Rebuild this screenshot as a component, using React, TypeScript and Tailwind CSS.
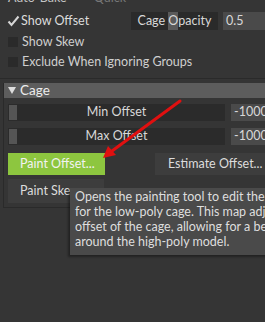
import React from "react";

const font = { fontFamily: 'Lato, "Open Sans", sans-serif' };

function Check({ checked }: { checked?: boolean }) {
  return checked ? (
    <svg width="13" height="12" viewBox="0 0 13 12" className="shrink-0">
      <path d="M1.5 6.5 L4.5 10 L11.5 1.5" stroke="#d6d6d6" strokeWidth="2" fill="none" />
    </svg>
  ) : (
    <div className="w-[10px] h-[10px] bg-[#2a2a2a] mr-[3px] shrink-0" />
  );
}

function SliderRow({ label }: { label: string }) {
  return (
    <div className="flex items-center h-[17px]">
      <div className="relative w-[217px] h-[17px] bg-[#2b2b2b] flex items-center justify-center">
        <div className="absolute left-[1px] top-[1px] w-[8px] h-[15px] bg-[#555555]" />
        <span className="text-[12.5px] text-[#d8d8d8] leading-none">{label}</span>
      </div>
      <div className="ml-[6px] flex-1 h-[17px] bg-[#4a4a4a] flex items-center pl-[3px] text-[12.5px] text-[#d8d8d8] leading-none whitespace-nowrap overflow-hidden">
        -10000
      </div>
    </div>
  );
}

export default function App() {
  return (
    <div className="relative w-[265px] h-[322px] bg-[#353535] overflow-hidden select-none" style={font}>
      <div className="h-[6px] flex items-end pl-[8px] text-[12.5px] leading-none">
        <div className="flex translate-y-[-2px] whitespace-nowrap">
          <span className="text-[#c4c4c4]">Auto</span>
          <span className="text-[#c4c4c4] ml-[5px]">Bake</span>
          <span className="text-[#777] ml-[15px]">•</span>
          <span className="text-[#777] ml-[5px]">Quick</span>
        </div>
      </div>
      <div className="flex items-center mt-[6px] h-[18px]">
        <div className="flex items-center pl-[7px] w-[131px] gap-[1px]">
          <Check checked />
          <span className="text-[12.5px] text-[#dcdcdc] leading-none whitespace-nowrap">Show Offset</span>
        </div>
        <div className="w-[87px] h-[18px] bg-[#2a2a2a] flex items-stretch justify-center text-[12.5px] text-[#d8d8d8] leading-none whitespace-nowrap">
          <span className="flex items-center">Cage&nbsp;</span>
          <span className="flex items-center bg-[#5a5a5a]">O</span>
          <span className="flex items-center">pacity</span>
        </div>
        <div className="ml-[5px] flex-1 h-[18px] bg-[#4a4a4a] flex items-center pl-[3px] text-[12.5px] text-[#d8d8d8] leading-none">
          0.5
        </div>
      </div>
      <div className="flex items-center pl-[8px] h-[20px] mt-[2px] gap-[1px]">
        <Check />
        <span className="text-[12.5px] text-[#cfcfcf] leading-none whitespace-nowrap">Show Skew</span>
      </div>
      <div className="flex items-center pl-[8px] h-[20px] gap-[1px]">
        <Check />
        <span className="text-[12.5px] text-[#cfcfcf] leading-none whitespace-nowrap">Exclude When Ignoring Groups</span>
      </div>
      <div className="mt-[6px] h-[1px] bg-[#2a2a2a]" />
      <div className="ml-[3px] mt-[4px] border-l border-b border-[#2a2a2a] pb-[4px]">
        <div className="h-[15px] bg-[#5d5d5d] flex items-center pl-[4px] gap-[4px]">
          <svg width="8" height="7" viewBox="0 0 8 7">
            <path d="M0 0 H8 L4 7 Z" fill="#dedede" />
          </svg>
          <span className="text-[13.5px] text-[#ececec] leading-none">Cage</span>
        </div>
        <div className="pl-[4px] pt-[6px] flex flex-col gap-[7px]">
          <SliderRow label="Min Offset" />
          <SliderRow label="Max Offset" />
        </div>
        <div className="pl-[4px] pt-[8px] flex items-center">
          <div className="w-[97px] h-[22px] bg-[#8dc63f] flex items-center pl-[12px] text-[12.5px] text-[#f2f2f2] leading-none whitespace-nowrap">
            Paint Offset...
          </div>
          <div className="ml-[50px] flex-1 h-[22px] bg-[#3d3d3d] flex items-center pl-[13px] text-[12.5px] text-[#dcdcdc] leading-none whitespace-nowrap overflow-hidden">
            Estimate Offset...
          </div>
        </div>
        <div className="pl-[4px] pt-[4px] flex">
          <div className="w-[96px] h-[24px] bg-[#3d3d3d] flex items-center pl-[12px] text-[12.5px] text-[#dcdcdc] leading-none whitespace-nowrap">
            Paint Skew...
          </div>
        </div>
      </div>

      <div className="absolute left-[70px] top-[188px] w-[210px] h-[67px] bg-[#4a4a4a] shadow-[-2px_2px_2px_rgba(0,0,0,0.35)] pl-[5px] pt-[1px] text-[12.5px] leading-[15px] text-[#dedede] whitespace-nowrap">
        <div>Opens the painting tool to edit the offset map</div>
        <div>for the low-poly cage. This map adjusts the</div>
        <div>offset of the cage, allowing for a better fit</div>
        <div>around the high-poly model.</div>
      </div>

      <svg className="absolute left-0 top-0 pointer-events-none" width="265" height="322">
        <line x1="180" y1="101" x2="112" y2="151" stroke="#e01010" strokeWidth="3" strokeLinecap="round" />
        <path d="M103 158 L108 146 L116 155 Z" fill="#e01010" />
      </svg>
    </div>
  );
}
